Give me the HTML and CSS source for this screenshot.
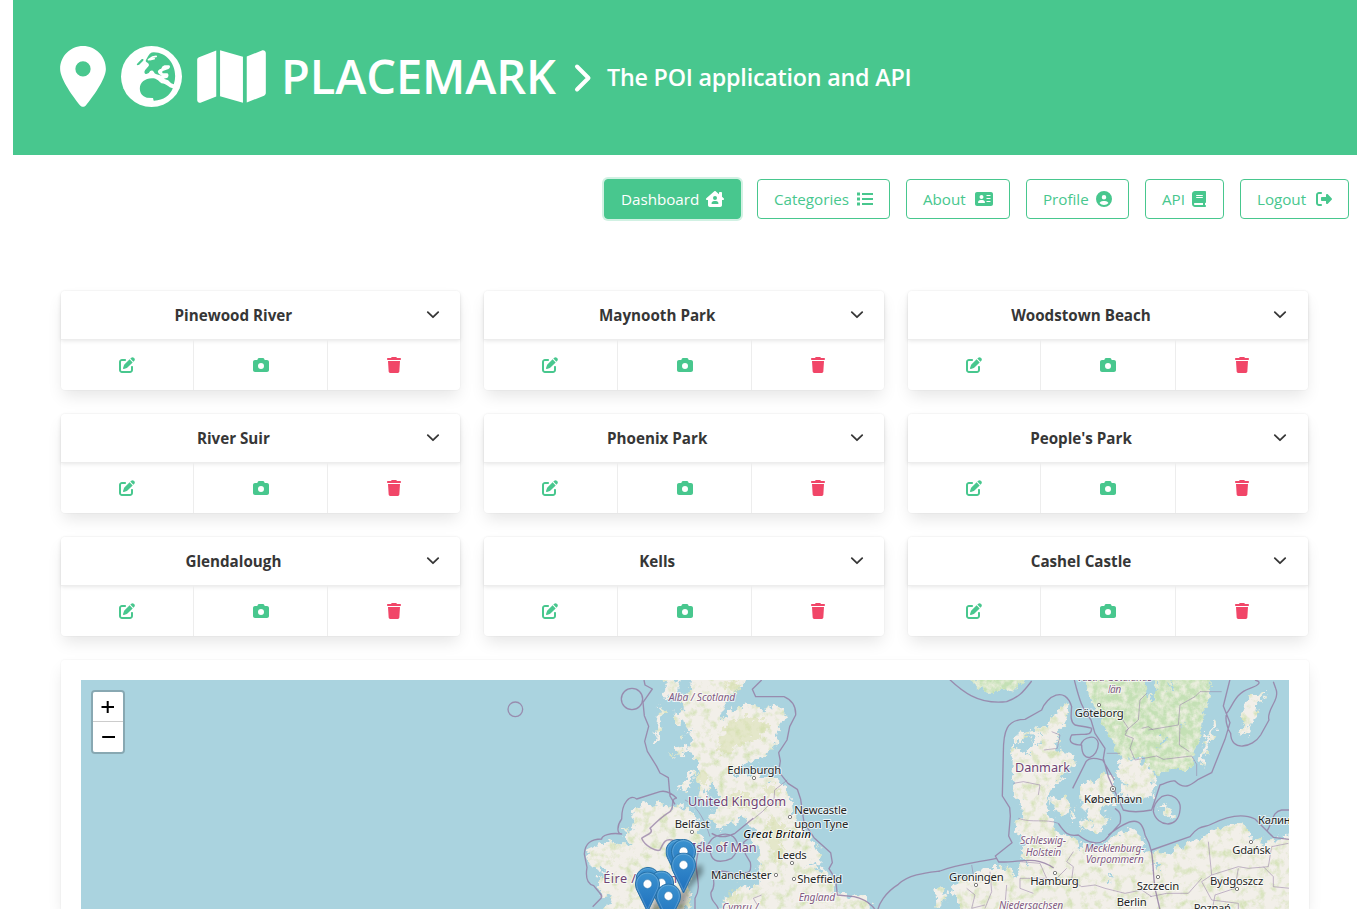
FILE: index.html
```html
<!DOCTYPE html>
<html lang="en">
<head>
<meta charset="utf-8">
<title>Placemark</title>
<link rel="stylesheet" href="styles.css">
</head>
<body>
<svg class="defs" width="0" height="0" aria-hidden="true">
  <symbol id="edit" viewBox="0 0 512 512"><path d="M471.6 21.7c-21.9-21.9-57.3-21.9-79.2 0L362.3 51.7l97.9 97.9 30.1-30.1c21.9-21.9 21.9-57.3 0-79.2L471.6 21.7zm-299.2 220c-6.1 6.1-10.8 13.6-13.5 21.9l-29.6 88.8c-2.9 8.6-.6 18.1 5.8 24.6s15.9 8.7 24.6 5.8l88.8-29.6c8.2-2.7 15.7-7.4 21.9-13.5L437.7 172.3 339.7 74.3 172.4 241.7zM96 64C43 64 0 107 0 160V416c0 53 43 96 96 96H352c53 0 96-43 96-96V320c0-17.7-14.3-32-32-32s-32 14.3-32 32v96c0 17.7-14.3 32-32 32H96c-17.7 0-32-14.3-32-32V160c0-17.7 14.3-32 32-32h96c17.7 0 32-14.3 32-32s-14.3-32-32-32H96z"/></symbol>
  <symbol id="camera" viewBox="0 0 512 512"><path d="M149.1 64.8L138.7 96H64C28.7 96 0 124.7 0 160V416c0 35.3 28.7 64 64 64H448c35.3 0 64-28.7 64-64V160c0-35.3-28.7-64-64-64H373.3L362.9 64.8C356.4 45.2 338.1 32 317.4 32H194.6c-20.7 0-39 13.2-45.5 32.8zM256 192a96 96 0 1 1 0 192 96 96 0 1 1 0-192z"/></symbol>
  <symbol id="trash" viewBox="0 0 448 512"><path d="M135.2 17.7L128 32H32C14.3 32 0 46.3 0 64S14.3 96 32 96H416c17.7 0 32-14.3 32-32s-14.3-32-32-32H320l-7.2-14.3C307.4 6.8 296.3 0 284.2 0H163.8c-12.1 0-23.2 6.8-28.6 17.7zM416 128H32L53.2 467c1.6 25.3 22.6 45 47.9 45H346.9c25.3 0 46.3-19.7 47.9-45L416 128z"/></symbol>
  <symbol id="down" viewBox="0 0 14 16"><path d="M1.800 5.200L7 10.200l5.200-5" fill="none" stroke="currentColor" stroke-width="1.800" stroke-linecap="round" stroke-linejoin="round"/></symbol>
  <linearGradient id="pinfill" x1="0" y1="0" x2="0" y2="1"><stop offset="0" stop-color="#3b92cf"/><stop offset="1" stop-color="#1e6fbd"/></linearGradient>
  <symbol id="pin" viewBox="0 0 25 41"><path d="M12.500.5C5.900.5.5 5.900.5 12.500c0 3 .9 5.500 2.300 8L12.500 40.500l9.700-20c1.400-2.500 2.300-5 2.300-8C24.500 5.900 19.100.5 12.500.5z" fill="url(#pinfill)" stroke="#2870a6"/><path d="M12.500 1.700C6.500 1.700 1.700 6.500 1.700 12.500c0 2.700.9 5.200 2.200 7.500l8.600 18 8.600-18c1.300-2.300 2.200-4.800 2.200-7.500 0-6-4.800-10.800-10.800-10.800z" fill="none" stroke="#fff" stroke-opacity=".2"/><circle cx="12.500" cy="12.500" r="4.400" fill="#fff" stroke="#2870a6" stroke-width=".5"/></symbol>
</svg>

<header class="hero">
  <svg class="hero-icon" width="46" height="61" viewBox="0 0 384 512"><path d="M215.700 499.200C267 435 384 279.400 384 192C384 86 298 0 192 0S0 86 0 192c0 87.400 117 243 168.300 307.200c12.300 15.300 35.100 15.300 47.400 0zM192 128a64 64 0 1 1 0 128 64 64 0 1 1 0-128z"/></svg>
  <svg class="hero-icon" width="61" height="61" viewBox="363.500 78 183 183"><circle cx="455" cy="169.500" r="91.500"/><g class="cut"><path d="M462 97C500 98 526 130 526 168Q526 181 522 193L514 190 505 181 492 176 503 173Q509 166 503 160L489 160Q484 154 491 152L506 147Q514 141 508 136L494 136Q486 138 484 146 474 148 474 156 476 164 486 167L470 163Q464 162 462 156 458 149 451 153 446 164 437 162 431 158 436 150L447 137Q449 131 443 128 434 125 440 117 444 108 450 101 455 97 462 97Z"/><path d="M420 205C420 188 436 175 456 175 470 175 474 181 485 190 500 190 505 203 519 205 511 226 491 241 463 242 459 242 462 237 459 234L441 233C427 229 420 219 420 205ZM412 131l13-13c5-3 8 0 5 4l-12 12c-5 3-9 1-6-3z"/></g><path class="line" d="M446 119L458 111 469 109M450 119L463 116"/></svg>
  <svg class="hero-icon" width="69" height="61" viewBox="0 0 576 512"><path d="M384 476.100L192 421.200V35.900L384 90.800V476.100zm32-1.200V88.400L543.100 37.500c15.800-6.300 32.900 5.300 32.900 22.300V394.600c0 9.800-6 18.600-15.100 22.300L416 474.800zM15.100 95.100L160 37.200V423.600L32.900 474.500C17.100 480.800 0 469.200 0 452.200V117.400c0-9.800 6-18.600 15.100-22.300z"/></svg>
  <h1 class="brand">PLACEMARK</h1>
  <svg class="hero-chevron" width="18" height="30" viewBox="0 0 18 30"><path d="M3 3.500l11.500 11.500L3 26.500"/></svg>
  <p class="tagline">The POI application and API</p>
</header>

<nav class="nav">
  <a class="button active b1"><span>Dashboard</span><i><svg width="18" height="16" viewBox="0 0 576 512"><path fill-rule="evenodd" d="M575.800 255.500c0 18-15 32.100-32 32.100h-32l.7 160.200c.2 35.500-28.500 64.300-64 64.300H128.100c-35.300 0-64-28.700-64-64V287.600H32c-18 0-32-14-32-32.100 0-9 3-17 10-24L266.400 8c7-7 15-8 22-8s15 2 21 7L416 100V64c0-17.700 14.300-32 32-32h32c17.700 0 32 14.300 32 32v121l52.800 46.500c8 7 12 15 11 24zM352 224a64 64 0 1 0-128 0 64 64 0 1 0 128 0zm-96 96c-44.200 0-80 35.800-80 80 0 8.800 7.200 16 16 16h192c8.800 0 16-7.200 16-16 0-44.200-35.800-80-80-80z"/></svg></i></a>
  <a class="button b2"><span>Categories</span><i><svg width="16" height="16" viewBox="0 0 16 16"><path d="M0 1.500h3v3H0zM5 2h11v2H5zM0 6.500h3v3H0zM5 7h11v2H5zM0 11.500h3v3H0zM5 12h11v2H5z"/></svg></i></a>
  <a class="button b3"><span>About</span><i><svg width="18" height="16" viewBox="0 0 576 512"><path fill-rule="evenodd" d="M64 32C28.700 32 0 60.700 0 96v320c0 35.300 28.700 64 64 64h448c35.300 0 64-28.700 64-64V96c0-35.300-28.700-64-64-64zM208 256a64 64 0 1 1 0-128 64 64 0 1 1 0 128zm-32 32h64c44.200 0 80 35.800 80 80 0 8.800-7.200 16-16 16H112c-8.800 0-16-7.200-16-16 0-44.200 35.800-80 80-80zM368 128h128v32H368zm0 96h128v32H368zm0 96h128v32H368z"/></svg></i></a>
  <a class="button b4"><span>Profile</span><i><svg width="16" height="16" viewBox="0 0 512 512"><path d="M399 384.200C376.900 345.800 335.400 320 288 320H224c-47.400 0-88.900 25.800-111 64.200c35.200 39.200 86.200 63.800 143 63.800s107.800-24.700 143-63.800zM0 256a256 256 0 1 1 512 0A256 256 0 1 1 0 256zm256 16a72 72 0 1 0 0-144 72 72 0 1 0 0 144z"/></svg></i></a>
  <a class="button b5"><span>API</span><i><svg width="14" height="16" viewBox="0 0 448 512"><path d="M96 0C43 0 0 43 0 96V416c0 53 43 96 96 96H384h32c17.700 0 32-14.300 32-32s-14.300-32-32-32V384c17.700 0 32-14.300 32-32V32c0-17.700-14.300-32-32-32H384 96zm0 384H352v64H96c-17.700 0-32-14.300-32-32s14.300-32 32-32zm32-240c0-8.800 7.200-16 16-16H336c8.800 0 16 7.200 16 16s-7.200 16-16 16H144c-8.800 0-16-7.200-16-16zm16 48H336c8.800 0 16 7.200 16 16s-7.200 16-16 16H144c-8.800 0-16-7.200-16-16s7.200-16 16-16z"/></svg></i></a>
  <a class="button b6"><span>Logout</span><i><svg width="16" height="16" viewBox="0 0 512 512"><path d="M377.900 105.900L500.700 228.700c7.200 7.200 11.300 17.100 11.300 27.300s-4.100 20.100-11.300 27.300L377.900 406.100c-6.400 6.400-15 9.900-24 9.900c-18.700 0-33.900-15.200-33.900-33.900l0-62.100-128 0c-17.700 0-32-14.300-32-32l0-64c0-17.700 14.300-32 32-32l128 0 0-62.100c0-18.700 15.200-33.900 33.900-33.900c9 0 17.600 3.600 24 9.900zM160 96L96 96c-17.700 0-32 14.300-32 32l0 256c0 17.700 14.300 32 32 32l64 0c17.700 0 32 14.300 32 32s-14.300 32-32 32l-64 0c-53 0-96-43-96-96L0 128C0 75 43 32 96 32l64 0c17.700 0 32 14.300 32 32s-14.300 32-32 32z"/></svg></i></a>
</nav>

<main class="content">
  <section class="cards">
    <article class="card"><div class="card-head"><h2>Pinewood River</h2><span class="toggle"><svg width="14" height="16"><use href="#down"/></svg></span></div><div class="card-foot"><a><svg width="16" height="16"><use href="#edit"/></svg></a><a><svg width="16" height="16"><use href="#camera"/></svg></a><a class="danger"><svg width="14" height="16"><use href="#trash"/></svg></a></div></article>
    <article class="card"><div class="card-head"><h2>Maynooth Park</h2><span class="toggle"><svg width="14" height="16"><use href="#down"/></svg></span></div><div class="card-foot"><a><svg width="16" height="16"><use href="#edit"/></svg></a><a><svg width="16" height="16"><use href="#camera"/></svg></a><a class="danger"><svg width="14" height="16"><use href="#trash"/></svg></a></div></article>
    <article class="card"><div class="card-head"><h2>Woodstown Beach</h2><span class="toggle"><svg width="14" height="16"><use href="#down"/></svg></span></div><div class="card-foot"><a><svg width="16" height="16"><use href="#edit"/></svg></a><a><svg width="16" height="16"><use href="#camera"/></svg></a><a class="danger"><svg width="14" height="16"><use href="#trash"/></svg></a></div></article>
    <article class="card"><div class="card-head"><h2>River Suir</h2><span class="toggle"><svg width="14" height="16"><use href="#down"/></svg></span></div><div class="card-foot"><a><svg width="16" height="16"><use href="#edit"/></svg></a><a><svg width="16" height="16"><use href="#camera"/></svg></a><a class="danger"><svg width="14" height="16"><use href="#trash"/></svg></a></div></article>
    <article class="card"><div class="card-head"><h2>Phoenix Park</h2><span class="toggle"><svg width="14" height="16"><use href="#down"/></svg></span></div><div class="card-foot"><a><svg width="16" height="16"><use href="#edit"/></svg></a><a><svg width="16" height="16"><use href="#camera"/></svg></a><a class="danger"><svg width="14" height="16"><use href="#trash"/></svg></a></div></article>
    <article class="card"><div class="card-head"><h2>People's Park</h2><span class="toggle"><svg width="14" height="16"><use href="#down"/></svg></span></div><div class="card-foot"><a><svg width="16" height="16"><use href="#edit"/></svg></a><a><svg width="16" height="16"><use href="#camera"/></svg></a><a class="danger"><svg width="14" height="16"><use href="#trash"/></svg></a></div></article>
    <article class="card"><div class="card-head"><h2>Glendalough</h2><span class="toggle"><svg width="14" height="16"><use href="#down"/></svg></span></div><div class="card-foot"><a><svg width="16" height="16"><use href="#edit"/></svg></a><a><svg width="16" height="16"><use href="#camera"/></svg></a><a class="danger"><svg width="14" height="16"><use href="#trash"/></svg></a></div></article>
    <article class="card"><div class="card-head"><h2>Kells</h2><span class="toggle"><svg width="14" height="16"><use href="#down"/></svg></span></div><div class="card-foot"><a><svg width="16" height="16"><use href="#edit"/></svg></a><a><svg width="16" height="16"><use href="#camera"/></svg></a><a class="danger"><svg width="14" height="16"><use href="#trash"/></svg></a></div></article>
    <article class="card"><div class="card-head"><h2>Cashel Castle</h2><span class="toggle"><svg width="14" height="16"><use href="#down"/></svg></span></div><div class="card-foot"><a><svg width="16" height="16"><use href="#edit"/></svg></a><a><svg width="16" height="16"><use href="#camera"/></svg></a><a class="danger"><svg width="14" height="16"><use href="#trash"/></svg></a></div></article>
  </section>

  <section class="map-card">
    <div class="map">
      <svg class="map-canvas" width="1208" height="229" viewBox="81 680 1208 229">
        <defs>
          <filter id="terrain" x="-5%" y="-5%" width="110%" height="110%" color-interpolation-filters="sRGB">
            <feTurbulence type="fractalNoise" baseFrequency=".05" numOctaves="4" seed="4" result="n"/>
            <feDisplacementMap in="SourceGraphic" in2="n" scale="42" xChannelSelector="R" yChannelSelector="G" result="land"/>
            <feTurbulence type="fractalNoise" baseFrequency=".04" numOctaves="5" seed="9" result="m"/>
            <feColorMatrix in="m" values="0 0 0 0 .82  0 0 0 0 .88  0 0 0 0 .70  2.600 0 0 0 -1.250" result="g"/>
            <feComposite in="g" in2="land" operator="in" result="veg"/>
            <feMerge><feMergeNode in="land"/><feMergeNode in="veg"/></feMerge>
          </filter>
          <filter id="forest" x="-5%" y="-5%" width="110%" height="110%" color-interpolation-filters="sRGB">
            <feTurbulence type="fractalNoise" baseFrequency=".05" numOctaves="4" seed="7" result="n"/>
            <feDisplacementMap in="SourceGraphic" in2="n" scale="30" xChannelSelector="R" yChannelSelector="G" result="land"/>
            <feTurbulence type="fractalNoise" baseFrequency=".05" numOctaves="5" seed="3" result="m"/>
            <feColorMatrix in="m" values="0 0 0 0 .77  0 0 0 0 .88  0 0 0 0 .71  2.500 0 0 0 -.65" result="g"/>
            <feComposite in="g" in2="land" operator="in" result="veg"/>
            <feMerge><feMergeNode in="land"/><feMergeNode in="veg"/></feMerge>
          </filter>
          <filter id="rough" x="-5%" y="-5%" width="110%" height="110%">
            <feTurbulence type="fractalNoise" baseFrequency=".06" numOctaves="4" seed="2" result="n"/>
            <feDisplacementMap in="SourceGraphic" in2="n" scale="45" xChannelSelector="R" yChannelSelector="G"/>
          </filter>
          <filter id="soft" x="-50%" y="-50%" width="200%" height="200%"><feGaussianBlur stdDeviation="2.500"/></filter>
        </defs>

        <!-- British Isles -->
        <g transform="translate(560 675) scale(.33333)">
          <g class="land" filter="url(#terrain)">
            <path d="M395 0H560L540 40 505 70 490 105 475 130 500 122 530 97 560 88 610 100 670 92 680 115 660 160 650 200 625 235 600 255 560 262 540 285 510 300 560 300 595 290 612 305 650 312 680 340 695 370 700 425 725 465 770 510 792 550 770 570 740 575 790 582 812 600 828 630 820 655 860 658 910 665 935 690 940 750H480L482 690 510 660 535 630 580 638 605 615 590 570 600 540 592 515 570 500 590 470 570 445 545 430 510 445 480 465 452 435 458 408 482 380 468 345 455 320 445 350 440 385 415 368 420 335 405 310 412 270 400 240 375 230 395 195 380 175 400 160 378 140 350 150 340 110 375 105 355 65 385 60Z"/>
            <path d="M320 20l40-10-5 30-25 30-20-5zM295 95l20 10-15 35 5 20-15 40-8-5 8-45zM345 100l25 25 25 0 8 25-10 20-25-30-25-15zM365 175l10 5-8 8zM345 215l35 5-12 20-22 2zM385 300l20-15-10 35-15 30-20-5 5-20zM325 238l18 5-10 5zM480 505l20-5-8 28z"/>
            <path d="M215 410L250 385 285 392 305 378 340 400 382 395 405 418 412 455 432 492 400 518 395 560 383 600 392 650 372 720H120L160 665 105 650 120 610 150 595 95 570 80 530 110 510 145 502 210 510 185 465 230 452 220 430Z"/>
          </g>
          <g class="forest-spots" filter="url(#rough)"><path d="M495 25l50-8-15 35-30-8zM510 140l60-20 60 30-30 40-90 25-35-15zM410 300l20-20 15 40-25 15zM490 370l60-20 40 20-30 30-50-5zM625 430l40 10 20 30-30 20 20 50-20 25-30-50zM595 340l40-10 30 15-20 20zM470 195l30 5 20 30-30 15zM510 650l25 5-5 35-30 10z"/></g>
          <g class="border">
            <path d="M252 15l3 15 22 12-28 40 4 40 13 32-12 45 8 30 28 45 10 20 25 14 5 55 15 25M605 15l-28 28 10 22 85 0c28 12 36 32 35 55l-18 35-8 40-25 38 5 25-5 32 28 35 28 18 10 30 10 70 30 45 50 45 5 30-10 18 20 32 5 47 50 5c45 10 75 40 75 75M350 370c-15-15-30-25-50-20l-70 22c-20-15-45 10-45 60-15 20-15 45 0 45-35-5-60 5-60 15-30 0-50 10-52 45l8 40c-5 30 0 50 20 55 15 20 30 30 22 38l-25 25M450 500c10-20 50-30 70-15 20 20 15 45-5 65-20 10-50 15-60-5l-12-35zM455 475c15 10 40 15 70 0l55-45M425 500c-10 25-20 60-15 90 5 35 10 55-5 80v40M475 702c-5-20-25-20-22-50 20-25 0-50 5-60 45-10 60 5 75 10 15-20 45 10 38-40l-15-25-5-35 35-28"/><circle cx="216" cy="72" r="32"/><circle cx="-134" cy="103" r="22"/>
            <path class="county" d="M350 370c-20 0-5 25-20 40-25 15-50 40-60 50 15 15-15 20-25 30 10 25 45 40 55 35 10-20 15-35 35-30l40 15 20 10 10-10"/>
            <path class="admin" d="M375 375c20 10 50 30 75 110M682 315l-38 30-2 30-35 35-27 22M605 660l-25 10 12 20"/>
          </g>
        </g>

        <!-- Scandinavia and northern Europe -->
        <g transform="translate(940 675) scale(.33333)">
          <g class="land" filter="url(#terrain)">
            <path d="M387 82L380 125 375 150 350 172 365 205 372 235 405 242 403 270 370 282 365 315 330 345 322 400 325 425 350 445 345 465 395 490 420 495 410 525 440 510 475 518 520 490 570 460 600 485 625 535 690 530 790 480 860 455 910 445 935 490 980 502 1060 470V750H10L60 700 30 650 40 625 105 600 130 580 205 578 225 605 240 560 275 575 240 530 255 510 235 470 232 435 248 430 240 370 215 345 225 320 215 280 215 220 230 180 270 165 320 155 345 110Z"/>
            <path d="M420 340l25-25 20 15 25-40 32 15 0 40 5 35-30 10-15 25 15 15-45 10-10-35-20-10zM415 435l25-5 15 15 20-25 25 5 5 20-30 30-20-15-30 5zM332 365l25 5 25-10 15 30-15 28-25-5-22-25zM665 390l30 12 0 22-28-10zM400 400l5 20-15 35zM980 55l-25 30-5 45-20 20-20 38-12-5 12-35-5-35 25-55zM825 135l5 8-18 50-25 82-10-5 12-60zM-15 630l25 10 15 25-35 40z"/>
          </g>
          <g class="woods" filter="url(#forest)"><path d="M430 0H808L810 70 795 110 785 180 765 230 755 285 690 285 655 300 640 290 600 250 550 250 530 230 515 190 490 150 475 105 450 70ZM85 5h175l-35 40-45 5-35 0-38-18z"/></g>
          <g class="land" filter="url(#terrain)"><path d="M540 250L600 255 645 290 640 325 640 360 625 378 540 360 555 325 530 295Z"/></g>
          <g class="lakes" filter="url(#rough)"><path d="M620 15l28 0-12 50-12 15zM690 15l10 10-5 25-12-5zM665 190l12-5 3 12-10 5zM645 215l10 0 0 10zM725 150l10 5-8 8zM225 185l20 20 20-30 10 40-20 20-30-20zM265 180l25-5 10 25-22 0zM345 200l25 10-20 15zM640 560l20 5-8 20-10-5zM500 600l15 0-5 15z"/></g>
          <g class="border">
            <path d="M15 0c50 50 100 90 185 80 40-15 50-30 75-62M403 15c15 60 25 90 50 120l12 40 30 45-5 30 15 55 45 100c30 10 60 5 85 0l25-75c20-5 30-15 45-12 30 30 50 10 70-5l40-20 40-100 15-50-20-50 20-80M455 160c-10-5-30-5-50-10-15-10-12-30-10-55-20-65-75-30-90 10l-50 28c-55 0-65 35-65 100l-3 130 22 35 2 25-5 60 10 20-50 40 10 18h10c60 0 100-20 155 18M0 588c50-20 80-20 170-38M0 588c-40 5-95 10-125 40-40 25-60 60-62 80M455 160c0 25-20 15-60 20-15 25 10 30 30 30 0 60 50 40 50-5-5-30-45-20-53 5M398 340l40-80c15-20 45-5 50-5l35 60M355 445c20 30 30 40 60 35 30 25 60 30 80 15l45-50c5-25 0-35-15-45M505 480c70-55 100-55 110 0 30 50 20 90 30 160l15 65M635 525l115-40c30-40 45-25 65-38 70-35 110-25 130-15l55 55 60 8M980 470c20-30 15-60 45-65h25M945 15c20 5 15 15-15 25-45 15-50 50-70 75-5 15 0 45 12 60 0 55 65 45 90 5l25-45c-10-30 35-60 20-95l-7-20M665 365c30-15 60 10 55 40-5 60-70 50-80 5 0-15 5-30 25-45z"/>
            <path class="admin" d="M545 130l20 30-10 20 25 10-10 30 15 35M555 170l40-35 5-60 20-20M625 165l90-15 5-60 45-25 15-15h65M640 165l-15-10-20 5M720 150l-2 60 30 20M585 255l65-12 20 10 85-10 15 25v35M500 235h40M335 170l25 10-8 40-40 5M220 325l30-5 50 10-5 30M400 530l-20 30 20 15-5 40 30 20 40-5 30 10 60 15 50-10 30 20M235 430c40 15 80 0 120 15M150 590l5 60-20 50M240 560l60 5 20 45-80 0 0 30 40 15M100 600l-5-30M805 500l10 100-30 20 30 55 80 10 0 30M815 600l80-25 30 5 60-5 10-60 50-10M895 580l-10 60-60 20-10 55M970 575l30 30 0 30 50 5M630 665l50-10 65 0 40-45M80 640l25 20-10 40 40-10M200 630l-5 60M380 580l-30 30"/>
          </g>
        </g>

        <!-- Place names -->
        <g class="labels" transform="translate(560 675) scale(.33333)">
          <g class="region"><text x="326" y="77" textLength="200">Alba / Scotland</text><text x="716" y="677" textLength="110">England</text><text x="487" y="708" textLength="108">Cymru /</text></g>
          <g class="country"><text x="384" y="393" textLength="294">United Kingdom</text><text x="396" y="530" textLength="194">Isle of Man</text><text x="130" y="623" textLength="246">Éire / Ireland</text></g>
          <g class="city"><text x="502" y="297" textLength="162">Edinburgh</text><text x="703" y="418" textLength="158">Newcastle</text><text x="703" y="459" textLength="162">upon Tyne</text><text x="344" y="459" textLength="105">Belfast</text><text x="652" y="552" textLength="88">Leeds</text><text x="453" y="612" textLength="181">Manchester</text><text x="712" y="625" textLength="135">Sheffield</text><text class="island" x="550" y="490" textLength="203">Great Britain</text></g>
          <g class="dots"><circle cx="582" cy="309" r="5"/><circle cx="690" cy="426" r="5"/><circle cx="396" cy="471" r="5"/><circle cx="696" cy="564" r="5"/><circle cx="648" cy="600" r="5"/><circle cx="702" cy="612" r="5"/></g>
        </g>
        <g class="labels" transform="translate(940 675) scale(.33333)">
          <g class="region"><text x="411" y="19" textLength="226">Västra Götalands</text><text x="504" y="54" textLength="40">län</text><text x="241" y="507" textLength="137">Schleswig-</text><text x="257" y="542" textLength="107">Holstein</text><text x="434" y="530" textLength="179">Mecklenburg-</text><text x="437" y="565" textLength="174">Vorpommern</text><text x="177" y="701" textLength="193">Niedersachsen</text></g>
          <g class="country"><text x="225" y="291" textLength="165">Danmark</text></g>
          <g class="city"><text x="404" y="127" textLength="147">Göteborg</text><text x="432" y="384" textLength="175">København</text><text x="27" y="619" textLength="164">Groningen</text><text x="271" y="630" textLength="145">Hamburg</text><text x="590" y="644" textLength="128">Szczecin</text><text x="530" y="692" textLength="90">Berlin</text><text x="810" y="630" textLength="160">Bydgoszcz</text><text x="877" y="537" textLength="115">Gdańsk</text><text x="954" y="446" textLength="210">Калининград</text><text x="761" y="710" textLength="112">Poznań</text></g>
          <g class="dots"><circle cx="477" cy="90" r="5"/><circle cx="519" cy="342" r="8"/><circle cx="519" cy="342" r="2.500"/><circle cx="108" cy="630" r="5"/><circle cx="345" cy="594" r="5"/><circle cx="654" cy="606" r="5"/><circle cx="891" cy="642" r="5"/><circle cx="933" cy="501" r="5"/></g>
        </g>

        <g class="shadows" filter="url(#soft)"><path d="M682 892l12-24 8-4 1 9-14 16zM668 915l12-24 10 0-8 24zM648 915l10-22 8 6-5 16z"/></g>
        <use href="#pin" x="665.500" y="839" width="25" height="41"/>
        <use href="#pin" x="671" y="839" width="25" height="41"/>
        <use href="#pin" x="671" y="852.500" width="25" height="41"/>
        <use href="#pin" x="635.500" y="867" width="25" height="41"/>
        <use href="#pin" x="649" y="870.500" width="25" height="41"/>
        <use href="#pin" x="635" y="871.500" width="25" height="41"/>
        <use href="#pin" x="656" y="883.500" width="25" height="41"/>
      </svg>
      <div class="zoom">
        <a><svg width="14" height="14" viewBox="0 0 14 14"><path d="M.5 7h12.500M6.700 1v12"/></svg></a>
        <a><svg width="14" height="14" viewBox="0 0 14 14"><path d="M1.200 7h12.800"/></svg></a>
      </div>
    </div>
  </section>
</main>
</body>
</html>
```

FILE: styles.css
```css
* { box-sizing: border-box; }
html { background: #fff; }
body { margin: 0; height: 909px; overflow: hidden; font-family: "Open Sans", "Noto Sans", sans-serif; font-size: 16px; color: #363636; }
svg { display: block; }
.defs { position: absolute; }

.hero { margin: 0 11px 0 13px; height: 155px; padding: 0 47px; display: flex; align-items: center; background: #48c78e; color: #fff; }
.hero svg, .hero h1, .hero p { flex: none; }
.hero-icon { fill: #fff; margin-right: 15px; margin-bottom: 2px; }
.hero-icon .cut { fill: #48c78e; }
.hero-icon .line { fill: none; stroke: #fff; stroke-width: 5; stroke-linecap: round; }
.brand { margin: 0 0 4px; width: 276px; font-size: 47px; line-height: 64px; font-weight: 600; letter-spacing: -.1px; white-space: nowrap; }
.hero-chevron { margin: 1px 0 0 17px; fill: none; stroke: #fff; stroke-width: 4; stroke-linecap: round; stroke-linejoin: round; }
.tagline { margin: 0 0 1px 15px; font-size: 23.300px; line-height: 32px; font-weight: 600; letter-spacing: -.22px; white-space: nowrap; }

.nav { display: flex; justify-content: flex-end; gap: 16px; padding: 24px 19px 0 0; }
.button { display: flex; align-items: center; justify-content: space-between; height: 40px; padding: 0 13px 0 16px; border: 1px solid #48c78e; border-radius: 4px; color: #48c78e; font-size: 15.200px; letter-spacing: -.02px; white-space: nowrap; }
.button span { padding-bottom: 1px; }
.button i { width: 24px; height: 24px; display: flex; align-items: center; justify-content: center; }
.button svg { fill: currentColor; }
.button.active { background: #48c78e; color: #fff; box-shadow: 0 0 0 2px rgba(72, 199, 142, .25); }
.b1 { width: 137px; }
.b2 { width: 133px; }
.b3 { width: 104px; }
.b4 { width: 103px; }
.button.b2, .button.b4, .button.b5, .button.b6 { padding-right: 12px; }
.b5 { width: 79px; }
.b6 { width: 109px; }

.content { width: 1247.400px; margin: 72px 0 0 60.500px; }
.cards { display: grid; grid-template-columns: repeat(3, 399.800px); gap: 24px; }
.card, .map-card { border-radius: 4px; background: #fff; box-shadow: 0 8px 16px -2px rgba(10, 10, 10, .1), 0 0 0 1px rgba(10, 10, 10, .02); }
.card { height: 99px; }
.card-head { display: flex; height: 48px; align-items: center; border-radius: 4px 4px 0 0; box-shadow: 0 2px 4px rgba(10, 10, 10, .1); }
.card-head h2 { flex: 1; margin: 0; padding-left: 1px; text-align: center; font-size: 15.200px; line-height: 24px; font-weight: 700; }
.toggle { width: 55px; display: flex; justify-content: center; color: #363636; }
.card-foot { display: flex; height: 51px; border-top: 1px solid #ededed; }
.card-foot a { flex: 1; display: flex; align-items: center; justify-content: center; border-right: 1px solid #ededed; color: #48c78e; fill: currentColor; }
.card-foot a:nth-child(2) { padding-left: 1px; }
.card-foot a:last-child { border-right: 0; }
.card-foot .danger { color: #f14668; }

.map-card { width: 1248px; margin-top: 24px; padding: 20px 20px 0; height: 249px; border-radius: 4px 4px 0 0; }
.map { position: relative; height: 229px; overflow: hidden; background: #aad3df; }
.map-canvas { width: 1208px; }
.land { fill: #f2efe9; }
.woods { fill: #eaeedd; }
.forest-spots { fill: #d8e0ac; opacity: .5; }
.lakes { fill: #aad3df; }
.border { fill: none; stroke: #957fa6; stroke-width: 4; stroke-opacity: .85; stroke-linejoin: round; }
.border .county { stroke-width: 4.500; stroke-opacity: .75; }
.border .admin { stroke-width: 2.500; stroke-opacity: .65; }
.labels { font-family: "Noto Sans", "Open Sans", sans-serif; }
.labels text { paint-order: stroke; stroke: rgba(255, 255, 255, .7); stroke-width: 6px; stroke-linejoin: round; }
.region { font-size: 31px; font-style: italic; fill: #825a82; }
.country { font-size: 38px; fill: #704474; }
.city { font-size: 34px; fill: #262626; }
.city .island { font-style: italic; fill: #000; }
.dots { fill: #fff; stroke: #444; stroke-width: 2; }
.shadows { fill: #000; opacity: .35; }

.zoom { position: absolute; left: 10px; top: 10px; width: 34px; border: 2px solid rgba(0, 0, 0, .2); border-radius: 4px; background-clip: padding-box; }
.zoom a { height: 30px; display: flex; align-items: center; justify-content: center; background: #fff; border-radius: 0 0 2px 2px; }
.zoom a:first-child { border-bottom: 1px solid #ccc; border-radius: 2px 2px 0 0; }
.zoom path { fill: none; stroke: #000; stroke-width: 2; }
```
